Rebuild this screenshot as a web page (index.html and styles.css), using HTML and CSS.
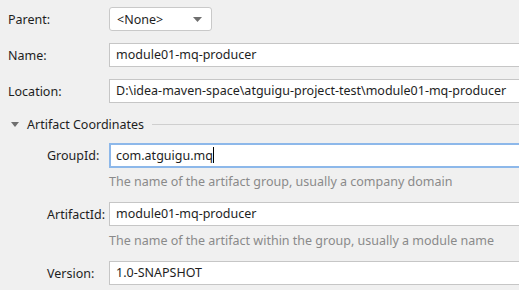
FILE: index.html
```html
<!DOCTYPE html>
<html lang="en">
<head>
	<meta charset="UTF-8">
	<title>New Module</title>
	<link rel="stylesheet" href="styles.css">
</head>
<body>
	<div id="form">
		<div class="row">
			<label>Parent:</label>
			<div class="select">
				<span>&lt;None&gt;</span>
				<svg width="9" height="5" viewBox="0 0 9 5"><path d="M0 0H9L4.5 5Z" fill="#6f6f6f"/></svg>
			</div>
		</div>
		<div class="row">
			<label>Name:</label>
			<div class="field">module01-mq-producer</div>
		</div>
		<div class="row">
			<label>Location:</label>
			<div class="field">D:\idea-maven-space\atguigu-project-test\module01-mq-producer</div>
		</div>

		<div class="group-title">
			<svg width="8" height="5" viewBox="0 0 8 5"><path d="M0 0H8L4 5Z" fill="#6f6f6f"/></svg>
			<span>Artifact Coordinates</span>
			<div class="line"></div>
		</div>

		<div class="group">
			<div class="row">
				<label>GroupId:</label>
				<div class="field focus">com.atguigu.mq<i class="caret"></i></div>
			</div>
			<div class="hint">The name of the artifact group, usually a company domain</div>
			<div class="row">
				<label>ArtifactId:</label>
				<div class="field">module01-mq-producer</div>
			</div>
			<div class="hint">The name of the artifact within the group, usually a module name</div>
			<div class="row">
				<label>Version:</label>
				<div class="field">1.0-SNAPSHOT</div>
			</div>
		</div>
	</div>
</body>
</html>
```

FILE: styles.css
```css
* {margin: 0;padding: 0;box-sizing: border-box;}
html, body {width: 519px;height: 290px;overflow: hidden;}
body {background: #f0f0f0; color: #1e1e1e; font: 12.5px "Noto Sans", "Open Sans", sans-serif;}
#form {padding: 7px 0 0 8px;}
.row {display: flex; align-items: center; height: 24px; margin-bottom: 12px;}
.row label {width: 101px; flex: none;}
.select {width: 103px;height: 24px;background: #fff;border: 1px solid #c9c9c9;border-radius: 3px; display: flex; align-items: center; justify-content: space-between; padding: 0 9px 0 7px;}
.field {flex: 1; height: 24px; margin-right: -4px; background: #fff; border: 1px solid #c6c6c6; border-right: none; padding: 0 6px; line-height: 22px; white-space: nowrap; overflow: hidden;}
.field.focus {height: 25px; border: 2px solid #8db8ea; border-right: none; padding-left: 5px; line-height: 21px;}
.caret {display: inline-block; width: 1px; height: 16px; background: #000; vertical-align: -3px;}
.group-title {display: flex; align-items: center; height: 18px; margin-left: 3px;}
.group-title svg {margin-right: 8px;}
.group-title span {white-space: nowrap;}
.group-title .line {flex: 1; height: 1px; background: #cfcfcf; margin: 1px -4px 0 8px;}
.group {padding: 10px 0 0 39px;}
.group .row {margin-bottom: 0;}
.group .row label {width: 62px;}
.hint {margin-left: 62px; height: 35px; padding-top: 5px; line-height: 20px; color: #8a8a8a; white-space: nowrap;}
```
